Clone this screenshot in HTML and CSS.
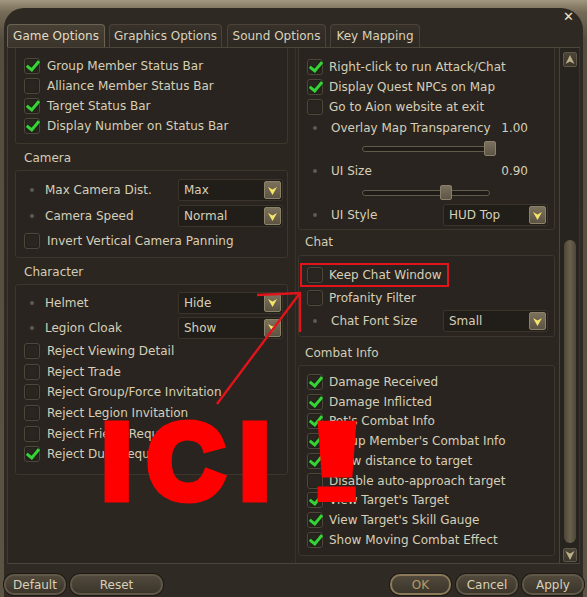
FILE: index.html
```html
<!DOCTYPE html>
<html>
<head>
<meta charset="utf-8">
<title>Game Options</title>
<link rel="stylesheet" href="styles.css">
</head>
<body>
<div class="window">
  <div class="top"><span class="close">✕</span></div>

  <div class="tabs">
    <span class="tab active">Game Options</span>
    <span class="tab t2">Graphics Options</span>
    <span class="tab t3">Sound Options</span>
    <span class="tab t4">Key Mapping</span>
  </div>

  <div class="panel">
    <div class="col left">
      <div class="box first">
        <div class="row"><span class="cb on"></span>Group Member Status Bar</div>
        <div class="row"><span class="cb"></span>Alliance Member Status Bar</div>
        <div class="row"><span class="cb on"></span>Target Status Bar</div>
        <div class="row"><span class="cb on"></span>Display Number on Status Bar</div>
      </div>

      <div class="head">Camera</div>
      <div class="box cam">
        <div class="row sel"><span class="dot"></span>Max Camera Dist.
          <span class="select">Max<span class="drop"><svg width="11" height="11" viewBox="0 0 11 11"><path d="M1 2 L5.5 4.6 L10 2 L5.5 10 Z" fill="#f4e46a"/></svg></span></span></div>
        <div class="row sel"><span class="dot"></span>Camera Speed
          <span class="select">Normal<span class="drop"><svg width="11" height="11" viewBox="0 0 11 11"><path d="M1 2 L5.5 4.6 L10 2 L5.5 10 Z" fill="#f4e46a"/></svg></span></span></div>
        <div class="row gap"><span class="cb"></span>Invert Vertical Camera Panning</div>
      </div>

      <div class="head">Character</div>
      <div class="box char">
        <div class="row sel"><span class="dot"></span>Helmet
          <span class="select">Hide<span class="drop"><svg width="11" height="11" viewBox="0 0 11 11"><path d="M1 2 L5.5 4.6 L10 2 L5.5 10 Z" fill="#f4e46a"/></svg></span></span></div>
        <div class="row sel"><span class="dot"></span>Legion Cloak
          <span class="select">Show<span class="drop"><svg width="11" height="11" viewBox="0 0 11 11"><path d="M1 2 L5.5 4.6 L10 2 L5.5 10 Z" fill="#f4e46a"/></svg></span></span></div>
        <div class="row gap1"><span class="cb"></span>Reject Viewing Detail</div>
        <div class="row"><span class="cb"></span>Reject Trade</div>
        <div class="row"><span class="cb"></span>Reject Group/Force Invitation</div>
        <div class="row"><span class="cb"></span>Reject Legion Invitation</div>
        <div class="row"><span class="cb"></span>Reject Friend Request</div>
        <div class="row"><span class="cb on"></span>Reject Duel Request</div>
      </div>
    </div>

    <div class="col right">
      <div class="box first">
        <div class="row"><span class="cb on"></span>Right-click to run Attack/Chat</div>
        <div class="row"><span class="cb on"></span>Display Quest NPCs on Map</div>
        <div class="row"><span class="cb"></span>Go to Aion website at exit</div>
        <div class="row val"><span class="dot"></span>Overlay Map Transparency<span class="num">1.00</span></div>
        <div class="row slide"><span class="track"><span class="thumb" style="left:121px"></span></span></div>
        <div class="row val v2"><span class="dot"></span>UI Size<span class="num">0.90</span></div>
        <div class="row slide"><span class="track"><span class="thumb" style="left:77px"></span></span></div>
        <div class="row sel s2"><span class="dot"></span>UI Style
          <span class="select">HUD Top<span class="drop"><svg width="11" height="11" viewBox="0 0 11 11"><path d="M1 2 L5.5 4.6 L10 2 L5.5 10 Z" fill="#f4e46a"/></svg></span></span></div>
      </div>

      <div class="head">Chat</div>
      <div class="box chat">
        <div class="row"><span class="cb"></span>Keep Chat Window</div>
        <div class="row r2"><span class="cb"></span>Profanity Filter</div>
        <div class="row sel s3"><span class="dot"></span>Chat Font Size
          <span class="select">Small<span class="drop"><svg width="11" height="11" viewBox="0 0 11 11"><path d="M1 2 L5.5 4.6 L10 2 L5.5 10 Z" fill="#f4e46a"/></svg></span></span></div>
      </div>

      <div class="head tall">Combat Info</div>
      <div class="box combat">
        <div class="row"><span class="cb on"></span>Damage Received</div>
        <div class="row"><span class="cb on"></span>Damage Inflicted</div>
        <div class="row"><span class="cb on"></span>Pet's Combat Info</div>
        <div class="row"><span class="cb on"></span>Group Member's Combat Info</div>
        <div class="row"><span class="cb on"></span>Show distance to target</div>
        <div class="row"><span class="cb"></span>Disable auto-approach target</div>
        <div class="row"><span class="cb on"></span>View Target's Target</div>
        <div class="row"><span class="cb on"></span>View Target's Skill Gauge</div>
        <div class="row"><span class="cb on"></span>Show Moving Combat Effect</div>
      </div>
    </div>

    <div class="scroll">
      <span class="sbtn"><svg width="10" height="11" viewBox="0 0 10 11"><path d="M5 1 L9.5 10 L5 7.5 L0.5 10 Z" fill="#bcae86"/></svg></span>
      <span class="spacer"></span>
      <span class="sthumb"></span>
      <span class="sbtn down"><svg width="10" height="11" viewBox="0 0 10 11"><path d="M5 10 L9.5 1 L5 3.5 L0.5 1 Z" fill="#bcae86"/></svg></span>
    </div>
  </div>

  <div class="buttons">
    <span class="btn b-default">Default</span>
    <span class="btn b-reset">Reset</span>
    <span class="fill"></span>
    <span class="btn b-ok">OK</span>
    <span class="btn b-cancel">Cancel</span>
    <span class="btn b-apply">Apply</span>
  </div>
</div>

<svg class="marks" width="587" height="597" viewBox="0 0 587 597">
  <rect x="301" y="264" width="147" height="22" fill="none" stroke="#e0141a" stroke-width="2"/>
  <path d="M217 404 L300 293 M257 295 L300 293 L300 332" fill="none" stroke="#e0141a" stroke-width="2.4"/>
</svg>
<div class="ici">ICI</div>
<div class="bang">!</div>
</body>
</html>
```

FILE: styles.css
```css
body {
	margin: 0;
	width: 587px;
	height: 597px;
	overflow: hidden;
	position: relative;
	background: linear-gradient(#a2977f, #756b57 12px, #544c3e 40px, #5b5343);
	font-family: "DejaVu Sans", sans-serif;
	font-size: 12px;
	color: #d6cfb8;
}

.window {
	margin: 8px 4px 0;
	height: 589px;
	background: #2e2923;
	border-radius: 20px 22px 0 0;
	display: flex;
	flex-direction: column;
}

.top { height: 16px; position: relative; }
.close {
	position: absolute; right: 9px; top: 1px;
	font-size: 13px; color: #ece4c6;
}

/* tabs */
.tabs { height: 23px; display: flex; gap: 4px; margin-left: 3px; }
.tab {
	box-sizing: border-box;
	width: 98px; height: 23px; line-height: 22px;
	text-align: center;
	border: 1px solid #4a4339; border-bottom: none;
	border-radius: 4px 4px 0 0;
	background: linear-gradient(#37312a, #2d2822);
	color: #d9d2bb;
	white-space: nowrap;
}
.tab.active { background: linear-gradient(#463f34, #3a342c); border-color: #6b6351; color: #e2dbc3; }
.tab.t2 { width: 113px; }
.tab.t3 { width: 99px; margin-left: 1px; }
.tab.t4 { width: 90px; }

/* main panel */
.panel {
	box-sizing: border-box;
	height: 517px;
	margin-left: 3px;
	margin-right: 3px;
	border-top: 1px solid #4c463b;
	border-bottom: 1px solid #4a4439;
	border-left: 1px solid #3f3930;
	display: grid;
	grid-template-columns: 288px 263px 21px;
	overflow: hidden;
	background: #2b2620;
}
.col { overflow: hidden; }
.col.left { padding: 0 7px; border-right: 1px solid #37322a; }
.col.right { padding: 0 4px 0 2px; }

.box {
	border: 1px solid #3c362d;
	border-radius: 3px;
	background: #29241f;
}
.box.first { border-top: none; border-radius: 0 0 3px 3px; }
.left .box.first { padding: 8px 0 7px; }
.cam { padding: 6px 0 6px; }
.char { padding: 5px 0 9px; }
.right .box.first { padding: 9px 0 2px; }
.chat { padding: 8px 0 4px; }
.combat { padding: 6px 0 5px; }

.head { height: 24px; line-height: 25px; padding: 2px 0 0 9px; color: #d3ccb4; }
.right .head { height: 25px; padding-left: 7px; padding-top: 0; }
.right .head.tall { height: 24px; line-height: 25px; padding-top: 4px; }

.row {
	height: 20px;
	display: flex;
	align-items: center;
	white-space: nowrap;
}
.row.sel { height: 26px; }
.char .row { height: 20.6px; }
.char .row.sel { height: 25px; }
.row.gap { margin-top: 2px; }
.row.gap1 { margin-top: 1px; }
.chat .row { height: 22px; }
.chat .row.r2 { height: 24px; }
.chat .row.s3 { height: 22px; }
.row.s2 { height: 24px; }
.combat .row { height: 19.75px; }
.row.val { height: 22px; }
.row.v2 { height: 24px; }

/* checkbox */
.cb {
	box-sizing: border-box;
	width: 16px; height: 16px;
	margin: 0 7px 0 8px;
	border: 1px solid #4d473c;
	border-radius: 3px;
	background: #2a2520;
	box-shadow: inset 0 0 2px #16130f;
	position: relative;
	flex: none;
}
.right .cb { margin-right: 6px; }
.cb.on::after {
	content: "";
	position: absolute;
	left: 4px; top: -1px;
	width: 5px; height: 10px;
	border-right: 3px solid #36d336;
	border-bottom: 3px solid #36d336;
	transform: rotate(40deg);
	filter: drop-shadow(0 0 1px #062006);
}

.dot {
	width: 4px; height: 4px;
	border-radius: 50%;
	background: #5c5b54;
	margin: 0 11px 0 14px;
	flex: none;
}
.right .dot { margin-right: 14px; }

/* dropdown */
.select {
	box-sizing: border-box;
	width: 105px; height: 22px;
	margin: 0 4px 0 auto;
	padding-left: 5px;
	border: 1px solid #3a342b;
	border-radius: 2px;
	background: #211d18;
	display: flex; align-items: center;
	position: relative;
}
.right .select { margin-right: 6px; }
.drop {
	box-sizing: border-box;
	width: 17px; height: 18px;
	margin-left: auto; margin-right: 1px;
	border: 1px solid #8c8169;
	border-radius: 2px;
	background: linear-gradient(#7b715c, #5c5343);
	display: flex; align-items: center; justify-content: center;
}

/* sliders */
.num { margin: 0 26px 0 auto; }
.track {
	box-sizing: border-box;
	width: 128px; height: 6px;
	margin-left: 63px;
	border: 1px solid #625a4b;
	border-radius: 3px;
	background: #1f1b16;
	position: relative;
}
.thumb {
	position: absolute; top: -6px;
	box-sizing: border-box;
	width: 12px; height: 15px;
	border: 1px solid #8b806a;
	border-radius: 2px;
	background: linear-gradient(#7a705d, #5d5546);
}

/* scrollbar */
.scroll {
	border-left: 1px solid #4a4438;
	border-right: 1px solid #3b352d;
	background: #27231e;
	display: flex; flex-direction: column; align-items: center;
	padding: 4px 0 1px;
}
.sbtn {
	box-sizing: border-box;
	width: 14px; height: 15px;
	border: 1px solid #5f5747;
	border-radius: 2px;
	background: linear-gradient(#4c4538, #3a342b);
	display: flex; align-items: center; justify-content: center;
	flex: none;
}
.sbtn.down { height: 14px; margin-top: 5px; }
.spacer { flex: 1; }
.sthumb {
	width: 12px; height: 303px;
	border-radius: 6px;
	background: linear-gradient(90deg, #4e4737, #6a604d 50%, #4e4737);
	flex: none;
}

/* bottom buttons */
.buttons {
	flex: 1;
	display: flex;
	padding-top: 10px;
	gap: 4px;
	background: #2f2a23;
}
.fill { flex: 1; }
.btn {
	box-sizing: border-box;
	height: 21px; line-height: 18px;
	border: 2px solid #5f5747;
	border-radius: 10px;
	background: linear-gradient(#51493b, #3b352b);
	text-align: center;
	color: #d8d0b8;
	box-shadow: 0 0 0 1px #1e1a15;
}
.b-default { width: 62px; }
.b-reset { width: 93px; }
.b-ok { width: 61px; color: #b59c66; border-color: #8a7a59; }
.b-cancel { width: 62px; margin-left: 1px; }
.b-apply { width: 62px; margin-right: -1px; }

/* red annotation on top of the screenshot */
.marks { position: absolute; left: 0; top: 0; pointer-events: none; }
.ici, .bang {
	position: absolute;
	font-family: "Liberation Sans", Arial, sans-serif;
	font-weight: bold;
	line-height: 1;
	color: #ff0000;
	white-space: nowrap;
}
.ici {
	left: 102px; top: 408px;
	font-size: 106px;
	-webkit-text-stroke: 9px #ff0000;
	letter-spacing: 16px;
}
.bang {
	left: 292px; top: 402px;
	font-size: 118px;
	transform: scaleX(2.3);
	transform-origin: 0 0;
}
```
